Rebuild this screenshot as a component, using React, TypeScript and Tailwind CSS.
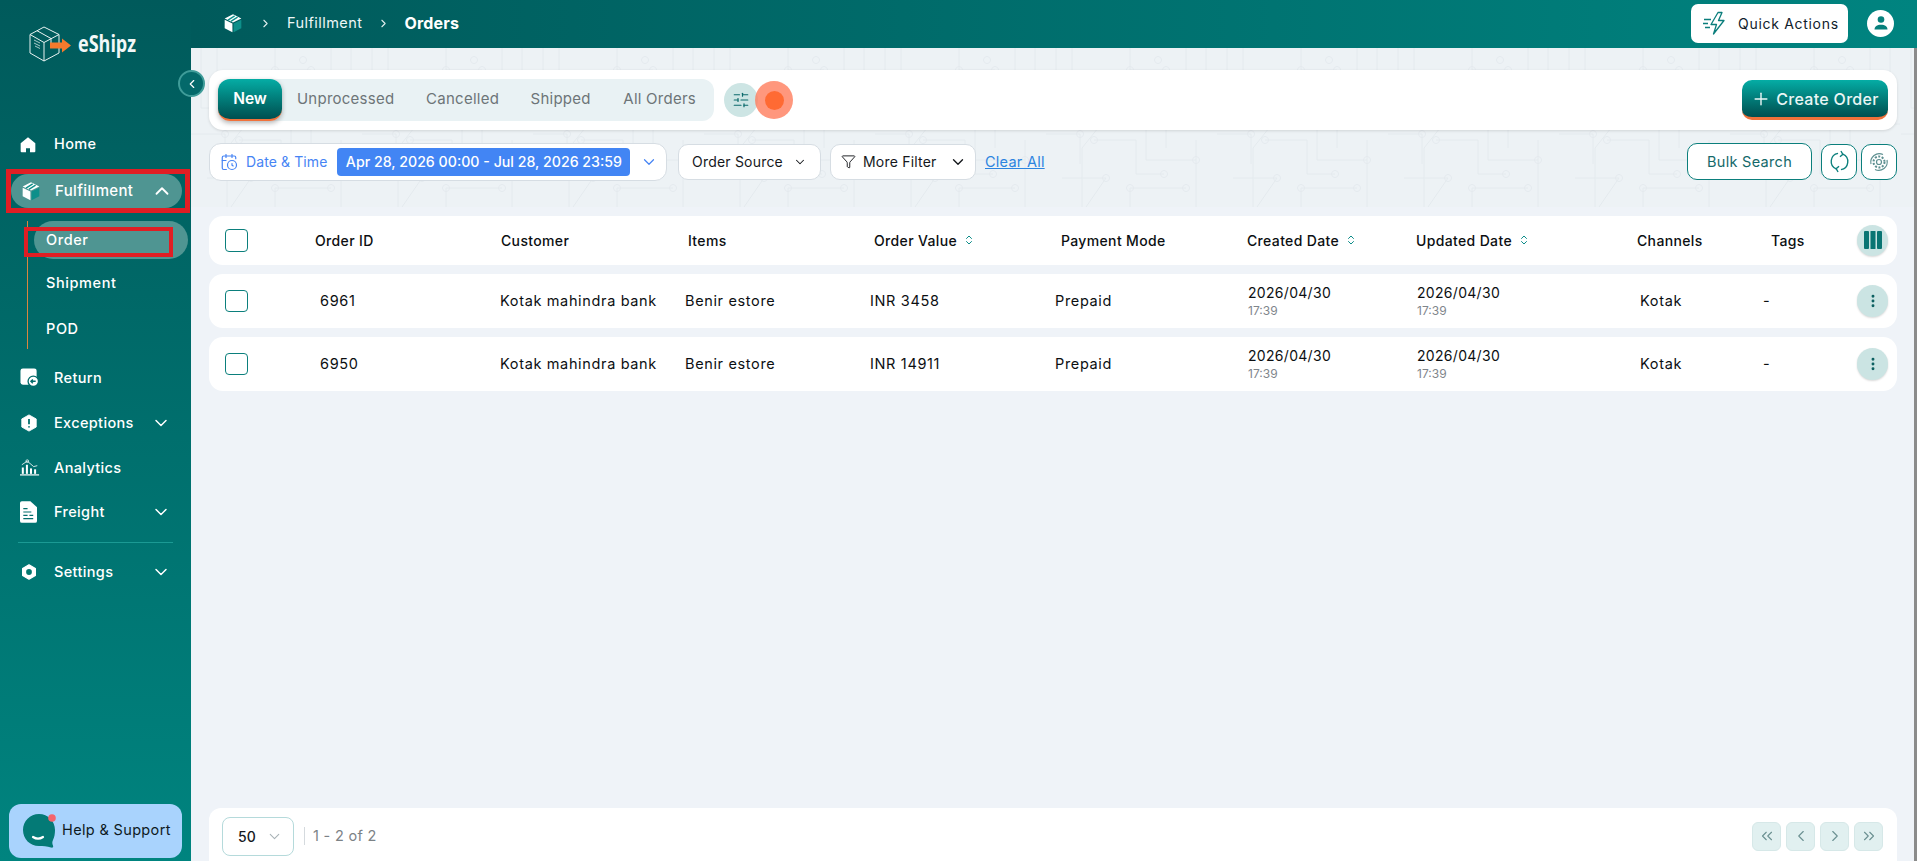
import {
  CalendarClock,
  ChevronDown,
  ChevronLeft,
  ChevronRight,
  ChevronUp,
  ChevronsLeft,
  ChevronsRight,
  ChevronsUpDown,
  EllipsisVertical,
  Filter,
  Plus,
  SlidersHorizontal,
} from 'lucide-react'
import type { ReactNode } from 'react'

const HEAD_GRID = 'grid flex-1 grid-cols-[186px_187px_186px_187px_186px_169px_221px_134px_86px_31px] items-center'
const ROW_GRID = 'grid flex-1 grid-cols-[180px_185px_185px_185px_193px_169px_223px_123px_94px_31px] items-center'

function BoxIcon({ className }: { className?: string }) {
  return (
    <svg viewBox="0 0 24 24" className={className}>
      <path d="M12 1.500 22 6.500 12 11.500 2 6.500Z" fill="#fff" />
      <path d="M2 8 11.300 12.600V23L2 18.200Z" fill="#fff" />
      <path d="M12.700 12.600 22 8V18.200L12.700 23Z" fill="#0d8f8a" />
      <path d="M6 8.500 14 3.500M9.500 10 17.500 5" stroke="#0d8f8a" strokeWidth="1.600" />
    </svg>
  )
}

function Logo() {
  return (
    <div className="flex items-center pl-[29px] pt-[26px]">
      <svg viewBox="0 0 44 36" className="h-[36px] w-[44px]">
        <g fill="none" stroke="#e8f3f2" strokeWidth="1">
          <path d="M15 1 30 8.500V27L15 35 1 27V8.500Z" />
          <path d="M1 8.500 15 16.500 30 8.500M15 16.500V35M8 4.700 22 12.500V17" />
        </g>
        <path d="M5 14l6 3M5 17l6 3M6 20l5 2.500" stroke="#d6e6e5" strokeWidth="0.800" />
        <path d="M21 16.500H33V12.500L42 19.500 33 26.500V22.500H21Z" fill="#f47a2c" />
      </svg>
      <span className="ml-[5px] mt-[-3px] font-['Open_Sans',sans-serif] text-[18px] font-bold leading-none text-[#f2f8f8] [transform:scaleY(1.25)]">
        eShipz
      </span>
    </div>
  )
}

function NavItem({ icon, label, chevron }: { icon: ReactNode; label: string; chevron?: boolean }) {
  return (
    <div className="flex h-[45px] items-center pl-[20px] pr-[20px] text-[14.500px] font-medium tracking-[0.35px] text-white">
      <span className="flex w-[34px] shrink-0">{icon}</span>
      <span>{label}</span>
      {chevron && <ChevronDown size={20} strokeWidth={1.800} className="ml-auto" />}
    </div>
  )
}

function Sidebar() {
  return (
    <aside className="relative z-10 flex h-full w-[191px] shrink-0 flex-col bg-gradient-to-b from-[#005a5b] to-[#00847f]">
      <div className="h-[122px]">
        <Logo />
      </div>
      <button className="absolute left-[178px] top-[70px] flex h-[27px] w-[27px] items-center justify-center rounded-full border-2 border-[#3f9c99] bg-[#04696a] text-white">
        <ChevronLeft size={14} />
      </button>

      <div className="flex h-[44px] items-center pl-[20px] text-[14.500px] font-medium tracking-[0.35px] text-white">
        <svg viewBox="0 0 24 24" className="mr-[18px] h-[17px] w-[16px]" fill="#fff">
          <path d="M12 1 23 10v12a1.500 1.500 0 0 1-1.500 1.500H15v-6h-6v6H2.500A1.500 1.500 0 0 1 1 22V10Z" />
        </svg>
        Home
      </div>

      {/* Fulfillment, boxed in red in the capture */}
      <div className="ml-[6px] mt-[3px] h-[44px] w-[184px] overflow-hidden border-[5px] border-[#e01e24]">
        <div className="flex h-full w-[171px] items-center rounded-full bg-[#4f9592] pl-[10px] pr-[9px] text-[15px] font-medium tracking-[0.35px] text-white">
          <BoxIcon className="h-[20px] w-[20px]" />
          <span className="ml-[14px]">Fulfillment</span>
          <ChevronUp size={22} strokeWidth={2} className="ml-auto" />
        </div>
      </div>

      <div className="relative ml-[27px] mt-[8px] h-[128px] border-l border-[#d9853f] text-[14.500px] font-medium tracking-[0.6px] text-white">
        <div className="relative ml-[6px] flex h-[38px] w-[154px] items-center rounded-full bg-[#4f9592] pl-[12px]">
          Order
          <div className="absolute left-[-10px] top-[6px] h-[30px] w-[149px] border-[4px] border-[#e01e24]" />
        </div>
        <div className="flex h-[48px] items-center pl-[18px]">Shipment</div>
        <div className="flex h-[44px] items-center pl-[18px]">POD</div>
      </div>

      <div className="mt-[6px]">
        <NavItem
          label="Return"
          icon={
            <svg viewBox="0 0 20 20" className="h-[19px] w-[19px]">
              <rect x="0.500" y="0.500" width="17" height="17" rx="2.500" fill="#fff" />
              <circle cx="14" cy="14" r="5.500" fill="#fff" stroke="#036c6b" strokeWidth="1.400" />
              <path d="M11.500 14h5M13.500 12l-2 2 2 2" stroke="#036c6b" strokeWidth="1.500" fill="none" />
            </svg>
          }
        />
        <NavItem
          label="Exceptions"
          chevron
          icon={
            <svg viewBox="0 0 20 20" className="h-[18px] w-[18px]">
              <path d="M10 1 18 5.500V14.500L10 19 2 14.500V5.500Z" fill="#fff" stroke="#fff" strokeLinejoin="round" />
              <path d="M10 5.500V11.500M10 13.500V15" stroke="#03706e" strokeWidth="2" />
            </svg>
          }
        />
        <NavItem
          label="Analytics"
          icon={
            <svg viewBox="0 0 22 18" className="h-[17px] w-[20px]" fill="#fff">
              <rect x="2" y="9" width="2.200" height="7" />
              <rect x="6.500" y="6" width="2.200" height="10" />
              <rect x="11" y="10" width="2.200" height="6" />
              <rect x="15.500" y="11" width="2.200" height="5" />
              <rect x="0" y="16.500" width="21" height="1.300" />
              <path d="M2 6 8 2 15 8 19 7" stroke="#fff" strokeWidth="0.900" fill="none" />
              <circle cx="8" cy="2" r="1.500" fill="none" stroke="#fff" strokeWidth="0.800" />
            </svg>
          }
        />
        <div className="mt-[-1px]">
          <NavItem
            label="Freight"
            chevron
            icon={
              <svg viewBox="0 0 18 23" className="h-[22px] w-[17px]">
                <path d="M2 0H11L18 6.500V21a2 2 0 0 1-2 2H2a2 2 0 0 1-2-2V2A2 2 0 0 1 2 0Z" fill="#fff" />
                <path d="M3.500 8H8M3.500 11.500H12M3.500 15H8M10 15H14M3.500 18.500H14" stroke="#036e6c" strokeWidth="1.300" />
              </svg>
            }
          />
        </div>
      </div>
      <div className="mx-[18px] mt-[8px] h-px bg-[#1b9a94]" />
      <div className="mt-[6px]">
        <NavItem
          label="Settings"
          chevron
          icon={
            <svg viewBox="0 0 20 20" className="ml-[1px] h-[16px] w-[16px]">
              <path d="M10 1 18 5.500V14.500L10 19 2 14.500V5.500Z" fill="#fff" stroke="#fff" strokeWidth="1.500" strokeLinejoin="round" />
              <circle cx="10" cy="10" r="3.600" fill="#02776f" />
            </svg>
          }
        />
      </div>

      <div className="mb-[3px] ml-[9px] mt-auto flex h-[54px] w-[173px] items-center rounded-[12px] bg-[#a9d3fd] pb-[3px] pl-[13px] text-[14.500px] font-normal tracking-[0.35px] text-[#0e1a22]">
        <svg viewBox="0 0 36 36" className="mt-[3px] h-[36px] w-[36px] shrink-0">
          <path d="M17 1C8 1 1 8 1 17s7 16 16 16c4 0 8 0 12 1.500 2 .6 2.500-1 2-2-.8-1.800-1-3.500 0-5.500 1.400-3 2-6 2-10C33 8 26 1 17 1Z" fill="#047a76" />
          <path d="M11 24c3 2 7 2 10 0" stroke="#fff" strokeWidth="2.200" fill="none" strokeLinecap="round" />
          <circle cx="30" cy="5" r="3.800" fill="#f4646c" />
        </svg>
        <span className="ml-[4px] whitespace-nowrap">Help &amp; Support</span>
      </div>
    </aside>
  )
}

function TopBar() {
  return (
    <header className="flex h-[48px] shrink-0 items-center bg-gradient-to-r from-[#005a5b] to-[#008480] pb-[2px] pl-[32px] pr-[23px] text-white">
      <BoxIcon className="h-[20px] w-[20px]" />
      <ChevronRight size={13} className="ml-[16px] text-[#dfeeee]" />
      <span className="ml-[15px] text-[14.500px] font-normal tracking-[0.45px] text-[#eef7f7]">Fulfillment</span>
      <ChevronRight size={13} className="ml-[15px] text-[#dfeeee]" />
      <span className="ml-[14px] text-[16px] font-bold tracking-[0.2px]">Orders</span>
      <div className="ml-auto flex h-[39px] w-[157px] items-center rounded-[7px] bg-white pl-[12px] text-[#10212b]">
        <svg viewBox="0 0 24 24" className="h-[28px] w-[24px]" fill="none" stroke="#0b7e7c" strokeWidth="1.300" strokeLinejoin="round">
          <path d="M15 1.500 8 13.500h5.500L10.500 23 21 9.500h-5.500L19 1.500Z" />
          <path d="M1 8.500H8M0 12.500H5M2 16.500H7" />
        </svg>
        <span className="ml-[11px] whitespace-nowrap text-[14px] tracking-[0.7px]">Quick Actions</span>
      </div>
      <div className="ml-[19px] flex h-[27px] w-[27px] items-center justify-center rounded-full bg-white">
        <svg viewBox="0 0 20 20" className="h-[20px] w-[20px]" fill="#06807c">
          <circle cx="10" cy="6.500" r="3.300" />
          <path d="M3.500 16.500c0-3 2.500-4.800 6.500-4.800s6.500 1.800 6.500 4.800Z" />
        </svg>
      </div>
    </header>
  )
}

function CircuitPattern() {
  return (
    <svg className="absolute inset-x-0 top-0 h-[159px] w-full" aria-hidden="true">
      <defs>
        <pattern id="circuit" width="171" height="159" patternUnits="userSpaceOnUse">
          <g fill="none" stroke="#e4eaee" strokeWidth="1">
            <path d="M10 0V60H48V30M26 0V44M84 0V22H120M140 0V32L112 60H60M160 0V70" />
            <path d="M0 86H34V116M48 92H90V126H118M132 76H170M150 92V159M16 130H60L40 159M84 159V140H140" />
            <path d="M60 70 36 100V159M100 76V112H150M120 100V70" />
            <circle cx="34" cy="86" r="3.500" />
            <circle cx="48" cy="92" r="3.500" />
            <circle cx="118" cy="126" r="3.500" />
            <circle cx="132" cy="76" r="3.500" />
            <circle cx="84" cy="22" r="3.500" />
            <circle cx="120" cy="22" r="3.500" />
            <circle cx="60" cy="130" r="3.500" />
            <circle cx="112" cy="12" r="3.500" />
            <circle cx="48" cy="30" r="3.500" />
            <circle cx="100" cy="76" r="3.500" />
            <circle cx="150" cy="112" r="3.500" />
            <circle cx="84" cy="140" r="3.500" />
            <circle cx="140" cy="140" r="3.500" />
          </g>
        </pattern>
      </defs>
      <rect width="100%" height="100%" fill="#edf2f5" />
      <rect width="100%" height="100%" fill="url(#circuit)" />
    </svg>
  )
}

function Tabs() {
  const tabs = [
    { label: 'Unprocessed', width: 'w-[131px]' },
    { label: 'Cancelled', width: 'w-[110px]' },
    { label: 'Shipped', width: 'w-[92px]' },
    { label: 'All Orders', width: 'w-[112px]' },
  ]
  return (
    <div className="flex h-[60px] items-center rounded-[14px] bg-white pl-[9px] pr-[9px] shadow-[0_1px_3px_rgba(0,0,0,0.12)]">
      <div className="flex h-[42px] w-[496px] items-center rounded-[12px] bg-[#e9f2f4] pb-[1px]">
        <div className="flex h-[42px] w-[66px] items-center justify-center rounded-[12px] border-b-2 border-[#f0713a] bg-gradient-to-b from-[#05ada5] to-[#004f50] text-[15.500px] font-semibold text-white shadow-[0_2px_5px_rgba(0,0,0,0.3)]">
          New
        </div>
        {tabs.map((tab) => (
          <div key={tab.label} className={`${tab.width} text-center text-[15px] tracking-[0.25px] text-[#6d7578]`}>
            {tab.label}
          </div>
        ))}
      </div>
      <div className="ml-[10px] flex h-[34px] w-[34px] items-center justify-center rounded-full bg-[#cde5e4]">
        <SlidersHorizontal size={18} strokeWidth={1.600} className="text-[#0b6a6b]" />
      </div>
      <div className="ml-[-3px] flex h-[38px] w-[38px] items-center justify-center rounded-full bg-[#ff7d5c]/80">
        <div className="h-[19px] w-[19px] rounded-full bg-[#ff6a33]" />
      </div>
      <button className="ml-auto flex h-[40px] w-[146px] items-center justify-center rounded-[10px] border-b-[3px] border-[#f0713a] bg-gradient-to-b from-[#05ada5] to-[#004f50] text-[16px] font-medium tracking-[0.3px] text-[#eaf6f5]">
        <Plus size={20} strokeWidth={1.700} className="mr-[5px]" />
        Create Order
      </button>
    </div>
  )
}

function Filters() {
  return (
    <div className="mt-[13px] flex h-[38px] items-center pb-[1px] text-[14px]">
      <div className="flex h-[38px] w-[458px] items-center rounded-[12px] border border-[#d6dde3] bg-white pl-[10px] text-[#4684f4]">
        <CalendarClock size={18} strokeWidth={1.600} />
        <span className="ml-[8px] whitespace-nowrap text-[14px] tracking-[0.1px]">Date &amp; Time</span>
        <span className="ml-[10px] flex h-[28px] w-[293px] items-center justify-center whitespace-nowrap rounded-[4px] bg-[#4285f4] text-[14.200px] font-medium text-white">
          Apr 28, 2026 00:00 - Jul 28, 2026 23:59
        </span>
        <ChevronDown size={18} strokeWidth={1.600} className="ml-[10px]" />
      </div>
      <div className="ml-[11px] flex h-[36px] w-[143px] items-center rounded-[10px] border border-[#d6dde3] bg-white pl-[13px] text-[14px] tracking-[0.2px] text-[#15181c]">
        Order Source
        <ChevronDown size={14} strokeWidth={1.800} className="ml-[10px]" />
      </div>
      <div className="ml-[9px] flex h-[36px] w-[146px] items-center rounded-[10px] border border-[#d6dde3] bg-white pl-[10px] text-[14px] tracking-[0.2px] text-[#15181c]">
        <Filter size={15} strokeWidth={1.500} />
        <span className="ml-[7px]">More Filter</span>
        <ChevronDown size={18} strokeWidth={1.800} className="ml-[12px]" />
      </div>
      <a href="#" className="ml-[9px] text-[14.500px] tracking-[0.25px] text-[#2c84e0] underline">
        Clear All
      </a>
      <button className="ml-auto flex h-[37px] w-[125px] items-center justify-center rounded-[10px] border border-[#0b7f7c] bg-white text-[14.500px] tracking-[0.3px] text-[#14696a]">
        Bulk Search
      </button>
      <button className="ml-[9px] flex h-[36px] w-[36px] items-center justify-center rounded-[10px] border border-[#0b7f7c] bg-white">
        <svg viewBox="0 0 24 24" className="h-[23px] w-[23px]" fill="none" stroke="#0b7f7c" strokeWidth="1.400">
          <path d="M13.500 20.500A8.500 8.500 0 0 0 15.500 4.300" />
          <path d="M10.500 3.500A8.500 8.500 0 0 0 8.500 19.700" />
          <path d="M13.500 1 15.500 4.500 12.500 7" />
          <path d="M10.500 23 8.500 19.500 11.500 17" />
        </svg>
      </button>
      <button className="ml-[4px] flex h-[36px] w-[36px] items-center justify-center rounded-[10px] border border-[#0b7f7c] bg-white">
        <svg viewBox="0 0 24 24" className="h-[24px] w-[24px]" fill="none" stroke="#5d8f90" strokeWidth="1.200">
          <circle cx="12" cy="12" r="2.500" />
          <circle cx="12" cy="12" r="5.500" strokeWidth="2" strokeDasharray="2 1.500" />
          <path d="M4 14A8.500 8.500 0 0 1 16 4.500M20 10A8.500 8.500 0 0 1 8 19.500" />
        </svg>
      </button>
    </div>
  )
}

function SortHead({ label }: { label: string }) {
  return (
    <span className="flex items-center">
      {label}
      <ChevronsUpDown size={12} strokeWidth={2} className="ml-[6px] text-[#0b8c88]" />
    </span>
  )
}

function TableHead() {
  return (
    <div className="mt-[35px] flex h-[49px] items-center rounded-[14px] bg-white pl-[16px] text-[14px] font-medium tracking-[0.35px] text-[#0c0f12]">
      <span className="w-[90px] shrink-0">
        <span className="block h-[23px] w-[23px] rounded-[4px] border border-[#0b7f7c]" />
      </span>
      <div className={`${HEAD_GRID} pb-[1px]`}>
        <span>Order ID</span>
        <span>Customer</span>
        <span>Items</span>
        <SortHead label="Order Value" />
        <span>Payment Mode</span>
        <SortHead label="Created Date" />
        <SortHead label="Updated Date" />
        <span>Channels</span>
        <span>Tags</span>
        <span className="flex h-[31px] w-[31px] items-center justify-center rounded-full bg-[#cbe4e3] shadow-[0_1px_2px_rgba(0,0,0,0.15)]">
          <svg viewBox="0 0 18 18" className="h-[18px] w-[18px]" fill="#0a7573">
            <rect x="0" y="0" width="5" height="18" rx="1" />
            <rect x="6.500" y="0" width="5" height="18" rx="0.500" />
            <rect x="13" y="0" width="5" height="18" rx="1" />
          </svg>
        </span>
      </div>
    </div>
  )
}

function DateCell() {
  return (
    <div className="leading-none">
      <div className="text-[14px] tracking-[0.3px] text-[#0c0f12]">2026/04/30</div>
      <div className="mt-[5px] text-[12px] tracking-normal text-[#7f868c]">17:39</div>
    </div>
  )
}

function OrderRow({ id, value }: { id: string; value: string }) {
  return (
    <div className="mt-[9px] flex h-[54px] items-center rounded-[14px] bg-white pl-[16px] text-[14.500px] tracking-[0.65px] text-[#0c0f12]">
      <span className="w-[95px] shrink-0">
        <span className="block h-[22px] w-[23px] rounded-[4px] border border-[#0b7f7c]" />
      </span>
      <div className={ROW_GRID}>
        <span>{id}</span>
        <span className="whitespace-nowrap">Kotak mahindra bank</span>
        <span>Benir estore</span>
        <span>{value}</span>
        <span>Prepaid</span>
        <DateCell />
        <DateCell />
        <span>Kotak</span>
        <span>-</span>
        <span className="flex h-[32px] w-[31px] items-center justify-center rounded-full bg-[#cbe4e3] shadow-[0_1px_2px_rgba(0,0,0,0.15)]">
          <EllipsisVertical size={16} strokeWidth={2.400} className="text-[#0b5f60]" />
        </span>
      </div>
    </div>
  )
}

function Footer() {
  const pager = [ChevronsLeft, ChevronLeft, ChevronRight, ChevronsRight]
  return (
    <div className="mt-auto flex h-[53px] items-center rounded-t-[12px] bg-white pl-[13px] pr-[14px]">
      <div className="mt-[3px] flex h-[39px] w-[72px] items-center rounded-[8px] border border-[#b5dadb] pl-[15px] text-[14px] font-medium text-[#15181c]">
        50
        <ChevronDown size={17} strokeWidth={1.500} className="ml-[10px] text-[#a8b2b6]" />
      </div>
      <span className="ml-[10px] mt-[3px] h-[18px] w-px bg-[#d5dade]" />
      <span className="ml-[8px] mt-[3px] text-[14.500px] tracking-[0.3px] text-[#7c8286]">1 - 2 of 2</span>
      <div className="ml-auto mt-[3px] flex items-center gap-[5px]">
        {pager.map((Icon, i) => (
          <span key={i} className="flex h-[29px] w-[29px] items-center justify-center rounded-[6px] border border-[#d6e8e8] bg-[#e1f0f0] text-[#6b9091]">
            <Icon size={18} strokeWidth={1.500} />
          </span>
        ))}
      </div>
    </div>
  )
}

export default function App() {
  return (
    <div className="flex h-[861px] w-full overflow-hidden bg-[#eff3f8] font-['Inter',sans-serif]">
      <Sidebar />
      <main className="flex h-full min-w-0 flex-1 flex-col">
        <TopBar />
        <div className="relative flex min-h-0 flex-1">
          <div className="relative flex min-w-0 flex-1 flex-col pl-[18px] pr-[17px] pt-[22px]">
            <CircuitPattern />
            <div className="relative flex h-full flex-col">
              <Tabs />
              <Filters />
              <TableHead />
              <OrderRow id="6961" value="INR 3458" />
              <OrderRow id="6950" value="INR 14911" />
              <Footer />
            </div>
          </div>
          <div className="w-[3px] shrink-0 bg-[#8b8b8b]" />
        </div>
      </main>
    </div>
  )
}
